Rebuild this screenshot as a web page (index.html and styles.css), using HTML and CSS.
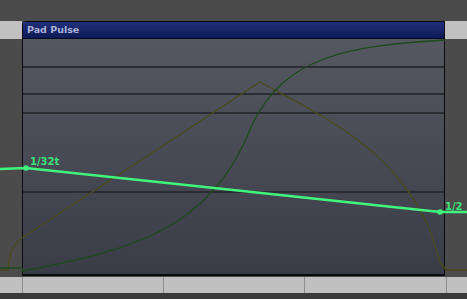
FILE: index.html
```html
<!DOCTYPE html>
<html>
<head>
    <meta charset="UTF-8">
    <title>Pad Pulse</title>
    <link rel="stylesheet" href="styles.css">
</head>
<body>
    <div class="lane">
        <div class="top-gap"></div>
        <div class="track">
            <div class="side">
                <div class="ruler"></div>
                <div class="void"></div>
            </div>
            <div class="region">
                <div class="region-head">Pad Pulse</div>
                <div class="region-body">
                    <div class="grid-line" style="margin-top: 27px"></div>
                    <div class="grid-line" style="margin-top: 25px"></div>
                    <div class="grid-line" style="margin-top: 17px"></div>
                    <div class="grid-line" style="margin-top: 77px"></div>
                </div>
            </div>
            <div class="side">
                <div class="ruler"></div>
                <div class="void"></div>
            </div>
        </div>
        <div class="bottom-bar">
            <div class="cell cell-a"></div>
            <div class="cell cell-b"></div>
            <div class="cell cell-c"></div>
            <div class="cell cell-d"></div>
        </div>
        <div class="bottom-gap"></div>

        <svg class="curves" width="467" height="299" viewBox="0 0 467 299">
            <!-- olive envelope -->
            <path d="M0 270 L8 270 C9 255 12 245 22 238 L260 82 C330 120 395 150 430 230 L440 262 L446 270 L467 270"
                  fill="none" stroke="#4b4a1c" stroke-width="1.3"/>
            <!-- dark green ramp -->
            <path d="M0 268 L22 268 L23 271 C130 250 210 232 252 125 C285 55 350 46 445 40"
                  fill="none" stroke="#1c4a1c" stroke-width="1.3"/>
            <!-- automation line -->
            <path d="M0 169 L26 168 L440 212 L467 212" fill="none" stroke="#40f57c" stroke-width="2.4"/>
            <circle cx="26" cy="168" r="2.8" fill="#40f57c"/>
            <circle cx="440" cy="212" r="2.8" fill="#40f57c"/>
        </svg>
        <span class="tag tag-start">1/32t</span>
        <span class="tag tag-end">1/2</span>
    </div>
</body>
</html>
```

FILE: styles.css
```css
body { margin: 0; background: #494949; font-family: "DejaVu Sans", Verdana, sans-serif; }
.lane { position: relative; width: 467px; height: 299px; display: flex; flex-direction: column; overflow: hidden; }
.top-gap { height: 21px; background: #4a4a4a; }
.track { display: flex; height: 255px; }
.side { flex: 1; display: flex; flex-direction: column; }
.ruler { height: 18px; background: #c1c1c1; }
.void { flex: 1; background: #4b4b4b; }
.region { width: 421px; display: flex; flex-direction: column; border: 1px solid #0b0b0b; border-top-left-radius: 4px; background: #111; }
.region-head { height: 16px; line-height: 16px; padding-left: 4px; font-size: 9.5px; font-weight: bold; color: #aab3d8; background: linear-gradient(#21307a, #0d1a58); border-bottom: 1px solid #060a20; }
.region-body { flex: 1; background: linear-gradient(#555861, #3a3d47); border-bottom: 1px solid #0b0b0b; }
.grid-line { height: 2px; background: #2c2d33; }
.bottom-bar { height: 16px; display: flex; background: #c0c0c0; border-top: 1px solid #4a4a4a; }
.cell { border-right: 1px solid #8e8e8e; }
.cell-a { width: 22px; }
.cell-b { width: 140px; }
.cell-c { width: 140px; }
.cell-d { width: 141px; }
.bottom-gap { flex: 1; background: #3a3a3a; }
.curves { position: absolute; left: 0; top: 0; }
.tag { position: absolute; font-size: 10px; font-weight: bold; color: #3ee07a; }
.tag-start { left: 30px; top: 156px; }
.tag-end { left: 445px; top: 201px; }
```
